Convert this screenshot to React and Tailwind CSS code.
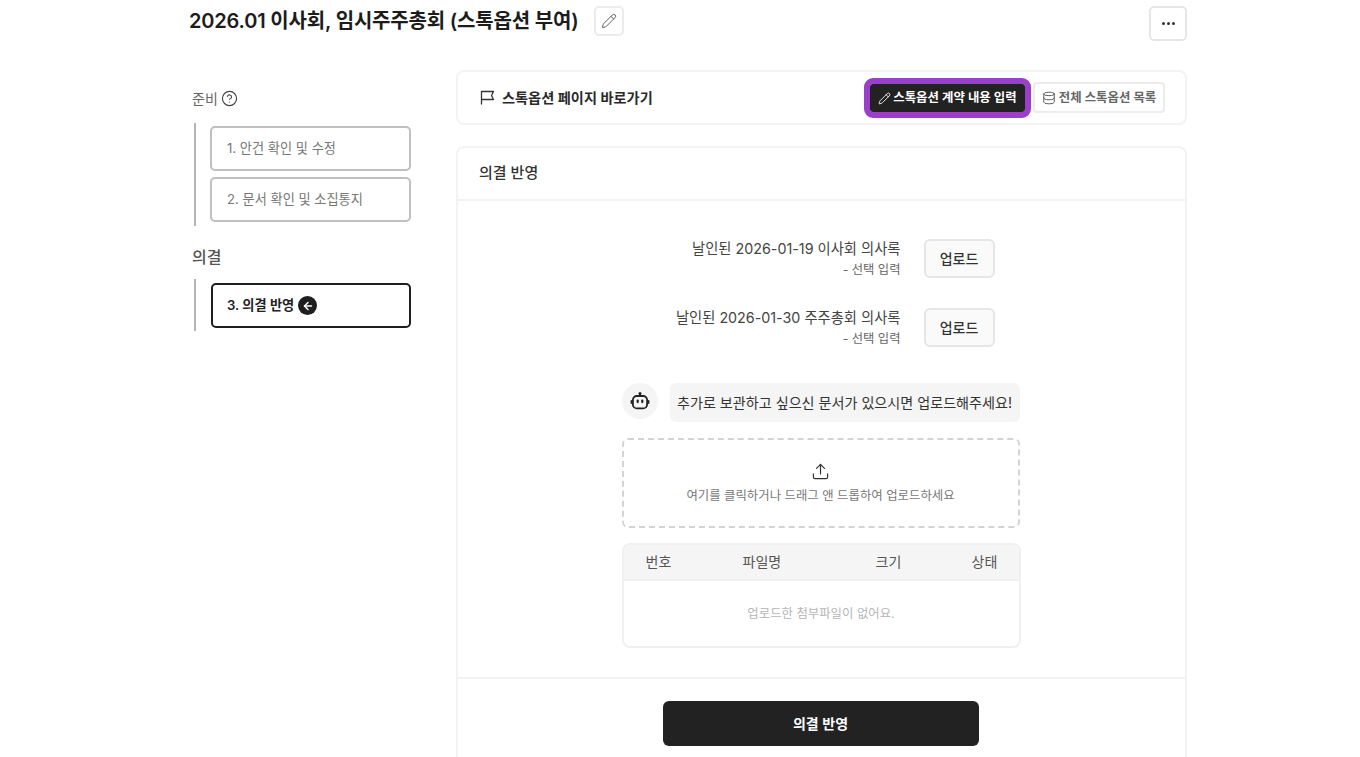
import React from "react";
import { Pencil, Database, Upload, CircleHelp, ArrowLeft } from "lucide-react";

const FONT = "font-['Inter','Noto_Sans_CJK_KR',sans-serif]";

function FlagIcon() {
  return (
    <svg width="15" height="15" viewBox="0 0 15 15" fill="none" stroke="#333" strokeWidth="1.3" strokeLinejoin="round" strokeLinecap="round">
      <path d="M1.5 14V1.5h12l-2 4 2 4H1.5" />
    </svg>
  );
}

function BotIcon() {
  return (
    <svg width="20" height="20" viewBox="0 0 20 20" fill="none">
      <circle cx="10" cy="2.6" r="1.5" fill="#222" />
      <path d="M10 3v2" stroke="#222" strokeWidth="1.5" />
      <rect x="2.9" y="5" width="14.2" height="12.4" rx="4" stroke="#222" strokeWidth="1.8" fill="#f5f5f5" />
      <rect x="6.6" y="8.4" width="2.2" height="3.8" rx="1.1" fill="#222" />
      <rect x="11.2" y="8.4" width="2.2" height="3.8" rx="1.1" fill="#222" />
      <rect x="0.6" y="9" width="1.5" height="4" rx="0.7" fill="#222" />
      <rect x="17.9" y="9" width="1.5" height="4" rx="0.7" fill="#222" />
    </svg>
  );
}

function DocRow({ title, upload }) {
  return (
    <div className="flex items-center justify-end gap-[23px] w-[373px]">
      <div className="text-right whitespace-nowrap">
        <div className="text-[14.3px] leading-[20px] text-[#444]">{title}</div>
        <div className="text-[12.3px] leading-[16px] mt-[3px] text-[#666]">- 선택 입력</div>
      </div>
      <button className="w-[71px] h-[39px] rounded-md border-2 border-[#e6e6e6] bg-[#fafafa] text-[14px] font-medium text-[#333]">{upload}</button>
    </div>
  );
}

function Step({ children, active }) {
  return (
    <div className={active
      ? "h-[45px] rounded-[5px] border-2 border-[#1f1f1f] flex items-center pl-[14px] gap-[4px] text-[13.2px] font-semibold text-[#222]"
      : "h-[45px] rounded-[5px] border-2 border-[#c0c0c0] flex items-center pl-[15px] text-[13.2px] text-[#777]"}>
      {children}
    </div>
  );
}

export default function App() {
  return (
    <div className={`${FONT} h-[757px] overflow-hidden bg-white pl-[189px] w-[1360px]`}>
      <div className="w-[998px]">
        <header className="h-[70px] flex items-start justify-between pt-[6px]">
          <div className="flex items-center gap-[15px] h-[30px]">
            <h1 className="text-[20px] leading-[30px] font-semibold text-[#1c1c1c] tracking-[-0.18px]">2026.01 이사회, 임시주주총회 (스톡옵션 부여)</h1>
            <button className="w-[30px] h-[30px] rounded-[5px] border-2 border-[#ececec] flex items-center justify-center">
              <Pencil size={16} strokeWidth={1.4} color="#555" />
            </button>
          </div>
          <button className="w-[38px] h-[35px] rounded-[5px] border-2 border-[#e6e6e6] flex items-center justify-center gap-[2px]">
            <span className="w-[3px] h-[3px] rounded-full bg-[#333]" />
            <span className="w-[3px] h-[3px] rounded-full bg-[#333]" />
            <span className="w-[3px] h-[3px] rounded-full bg-[#333]" />
          </button>
        </header>

        <div className="flex">
          <aside className="w-[267px] shrink-0 pl-[3px] pt-[19px]">
            <div className="flex items-center gap-[3px] h-[18px] text-[14px] text-[#666]">
              준비 <CircleHelp className="mt-[1px]" size={17} strokeWidth={1.6} color="#444" />
            </div>
            <div className="mt-[16px] ml-[2px] w-[217px] border-l-2 border-[#b5b5b5] pl-[14px] pt-[3px] pb-[4px] flex flex-col gap-[6px]">
              <Step>1. 안건 확인 및 수정</Step>
              <Step>2. 문서 확인 및 소집통지</Step>
            </div>
            <div className="mt-[22px] text-[16px] leading-[18px] font-medium text-[#555]">의결</div>
            <div className="mt-[13px] ml-[2px] w-[217px] border-l-2 border-[#b5b5b5] pl-[15px] pt-[4px] pb-[3px]">
              <Step active>
                <span>3. 의결 반영</span>
                <span className="w-[19px] h-[19px] rounded-full bg-[#1f1f1f] flex items-center justify-center">
                  <ArrowLeft size={12} strokeWidth={3} color="#fff" />
                </span>
              </Step>
            </div>
          </aside>

          <main className="w-[731px]">
            <section className="h-[55px] rounded-lg border-2 border-[#f3f3f3] flex items-center justify-between pl-[22px] pr-[20px]">
              <div className="flex items-center gap-[7px] text-[14.2px] font-semibold text-[#2a2a2a]">
                <FlagIcon />
                <span>스톡옵션 페이지 바로가기</span>
              </div>
              <div className="flex items-center gap-[2px]">
                <div className="rounded-[9px] border-[6px] border-[#9a3fca]">
                  <button className="h-[28px] w-[155px] pt-[1px] rounded-[3px] bg-[#222] text-white text-[12.4px] font-semibold flex items-center justify-center gap-[2px]">
                    <Pencil size={13} strokeWidth={1.6} color="#fff" />
                    스톡옵션 계약 내용 입력
                  </button>
                </div>
                <button className="h-[31px] w-[132px] pt-[1px] rounded-[4px] border-2 border-[#ececec] text-[#666] text-[12.4px] font-semibold flex items-center justify-center gap-[3px]">
                  <Database size={14} strokeWidth={1.6} color="#555" />
                  전체 스톡옵션 목록
                </button>
              </div>
            </section>

            <section className="mt-[21px] h-[640px] rounded-t-lg border-2 border-b-0 border-[#f3f3f3]">
              <div className="h-[53px] border-b-2 border-[#f3f3f3] pl-[21px] flex items-center text-[15px] font-medium text-[#333]">의결 반영</div>

              <div className="flex flex-col items-center">
                <div className="w-[398px] mr-[2px] pt-[38px]">
                  <div className="flex flex-col items-start gap-[30px]">
                    <DocRow title="날인된 2026-01-19 이사회 의사록" upload="업로드" />
                    <DocRow title="날인된 2026-01-30 주주총회 의사록" upload="업로드" />
                  </div>

                  <div className="mt-[36px] flex items-start gap-[12px]">
                    <div className="w-[36px] h-[36px] rounded-full bg-[#f5f5f5] flex items-center justify-center"><BotIcon /></div>
                    <div className="h-[39px] w-[350px] rounded-md bg-[#f5f5f5] flex items-center justify-center text-[14.1px] text-[#333]">추가로 보관하고 싶으신 문서가 있으시면 업로드해주세요!</div>
                  </div>

                  <div className="mt-[16px] h-[90px] rounded-md border-2 border-dashed border-[#d4d4d4] flex flex-col items-center justify-center gap-[7px] pb-[1px]">
                    <Upload size={19} strokeWidth={1.5} color="#333" />
                    <div className="text-[12.4px] leading-[16px] text-[#777]">여기를 클릭하거나 드래그 앤 드롭하여 업로드하세요</div>
                  </div>

                  <div className="mt-[15px] w-[399px] h-[105px] rounded-lg border-2 border-[#f0f0f0] overflow-hidden">
                    <div className="h-[36px] bg-[#f5f5f5] border-b-2 border-[#f0f0f0] flex items-center pb-[2px] text-[14px] text-[#555]">
                      <span className="w-[119px] pl-[22px]">번호</span>
                      <span className="w-[133px]">파일명</span>
                      <span className="w-[96px]">크기</span>
                      <span>상태</span>
                    </div>
                    <div className="h-[65px] pt-[1px] flex items-center justify-center text-[12.4px] text-[#b5b5b5]">업로드한 첨부파일이 없어요.</div>
                  </div>
                </div>

                <div className="w-full mt-[29px] border-t-2 border-[#f3f3f3] pt-[22px] flex justify-center">
                  <button className="w-[316px] h-[45px] mr-[2px] rounded-md bg-[#222] text-white text-[14px] font-semibold">의결 반영</button>
                </div>
              </div>
            </section>
          </main>
        </div>
      </div>
    </div>
  );
}
